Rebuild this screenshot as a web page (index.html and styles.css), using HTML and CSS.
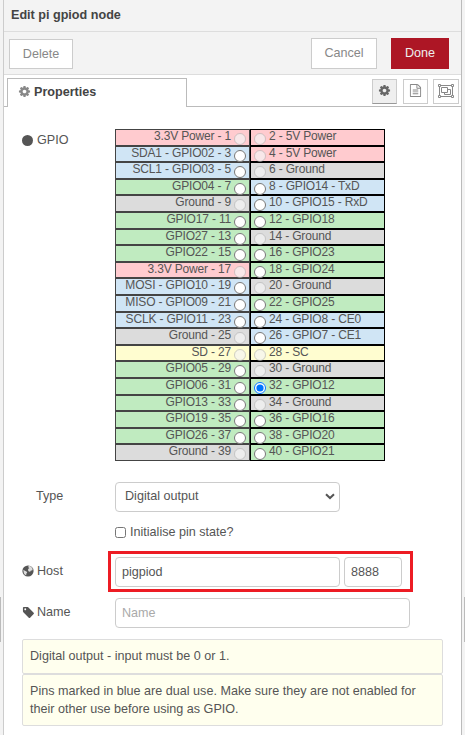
FILE: index.html
```html
<!DOCTYPE html>
<html lang="en">
<head>
<meta charset="utf-8">
<title>Edit pi gpiod node</title>
<link rel="stylesheet" href="styles.css">
</head>
<body>
<svg class="sprite" aria-hidden="true">
<symbol id="cog" viewBox="0 0 1792 1792"><path d="M1152 896q0-106-75-181t-181-75-181 75-75 181 75 181 181 75 181-75 75-181zm512-109v222q0 12-8 23t-20 13l-185 28q-19 54-39 91 35 50 107 138 10 12 10 25t-9 23q-27 37-99 108t-94 71q-12 0-26-9l-138-108q-44 23-91 38-16 136-29 186-7 28-36 28h-222q-14 0-24.500-8.500t-11.500-21.500l-28-184q-49-16-90-37l-141 107q-10 9-25 9-14 0-25-11-126-114-165-168-7-10-7-23 0-12 8-23 15-21 51-66.500t54-70.500q-27-50-41-99l-183-27q-13-2-21-12.500t-8-23.500v-222q0-12 8-23t19-13l186-28q14-46 39-92-40-57-107-138-10-12-10-24 0-10 9-23 26-36 98.500-107.500t94.500-71.500q13 0 26 10l138 107q44-23 91-38 16-136 29-186 7-28 36-28h222q14 0 24.500 8.500t11.500 21.500l28 184q49 16 90 37l142-107q9-9 24-9 13 0 25 10 129 119 165 170 7 8 7 22 0 12-8 23-15 21-51 66.500t-54 70.500q26 50 41 98l183 28q13 2 21 12.500t8 23.500z"/></symbol>
<symbol id="tag" viewBox="0 0 1792 1792"><path d="M576 448q0-53-37.500-90.500t-90.500-37.500-90.500 37.500-37.500 90.500 37.500 90.500 90.500 37.500 90.500-37.500 37.500-90.500zm1067 576q0 53-37 90l-491 492q-39 37-91 37-53 0-90-37l-715-716q-38-37-64.500-101t-26.500-117v-416q0-52 38-90t90-38h416q53 0 117 26.500t102 64.500l715 714q37 39 37 91z"/></symbol>
<symbol id="file" viewBox="0 0 1792 1792"><path d="M1596 380q28 28 48 76t20 88v1152q0 40-28 68t-68 28h-1344q-40 0-68-28t-28-68v-1600q0-40 28-68t68-28h896q40 0 88 20t76 48zm-444-244v376h376q-10-29-22-41l-313-313q-12-12-41-22zm384 1528v-1024h-416q-40 0-68-28t-28-68v-416h-768v1536h1280zm-1024-864q0-14 9-23t23-9h704q14 0 23 9t9 23v64q0 14-9 23t-23 9h-704q-14 0-23-9t-9-23v-64zm736 224q14 0 23 9t9 23v64q0 14-9 23t-23 9h-704q-14 0-23-9t-9-23v-64q0-14 9-23t23-9h704zm0 256q14 0 23 9t9 23v64q0 14-9 23t-23 9h-704q-14 0-23-9t-9-23v-64q0-14 9-23t23-9h704z"/></symbol>
<symbol id="group" viewBox="0 0 16 14"><g fill="none" stroke="currentColor"><path d="M2.500 1.500h11M2.500 12.500h11M1.500 2.500v9M14.500 2.500v9M3.500 3.500h6v5h-6zM9.500 5.500h3v5h-6v-2"/><path d="M.5.500h2v2h-2zM13.500.500h2v2h-2zM.5 11.500h2v2h-2zM13.500 11.500h2v2h-2z"/></g></symbol>
<symbol id="globe" viewBox="0 0 12 12"><circle cx="6" cy="6" r="5.600"/><path class="land" d="M6.200 1.300 8 1.100l1.800 1.300.9 1.700-.5 1.300-1.300.2-.8 1.200-1.300-.4-.9-1.300.5-1.300 1-.7-.9-.6zM1.300 4.800l1.500.9 1.700.8.700 1.100-.8 1-.2 1.700-1.500-.9-.9-1.500z"/></symbol>
</svg>
<main class="tray">
<header class="title">Edit pi gpiod node</header>
<div class="toolbar">
<button class="button delete">Delete</button>
<button class="button cancel">Cancel</button>
<button class="button primary">Done</button>
</div>
<nav class="tabs">
<div class="tab"><svg class="cog"><use href="#cog"/></svg>Properties</div>
<div class="tab-buttons">
<button class="icon-button selected"><svg class="cog"><use href="#cog"/></svg></button>
<button class="icon-button"><svg class="file"><use href="#file"/></svg></button>
<button class="icon-button wide"><svg class="group"><use href="#group"/></svg></button>
</div>
</nav>
<form class="form">
<div class="row pins-row">
<div class="label pins-label"><i class="dot"></i>GPIO</div>
<div class="pins">
<label class="pin power"><span>3.3V Power - 1</span><input type="radio" name="pin" disabled></label>
<label class="pin power"><input type="radio" name="pin" disabled><span>2 - 5V Power</span></label>
<label class="pin dual"><span>SDA1 - GPIO02 - 3</span><input type="radio" name="pin"></label>
<label class="pin power"><input type="radio" name="pin" disabled><span>4 - 5V Power</span></label>
<label class="pin dual"><span>SCL1 - GPIO03 - 5</span><input type="radio" name="pin"></label>
<label class="pin ground"><input type="radio" name="pin" disabled><span>6 - Ground</span></label>
<label class="pin"><span>GPIO04 - 7</span><input type="radio" name="pin"></label>
<label class="pin dual"><input type="radio" name="pin"><span>8 - GPIO14 - TxD</span></label>
<label class="pin ground"><span>Ground - 9</span><input type="radio" name="pin" disabled></label>
<label class="pin dual"><input type="radio" name="pin"><span>10 - GPIO15 - RxD</span></label>
<label class="pin"><span>GPIO17 - 11</span><input type="radio" name="pin"></label>
<label class="pin"><input type="radio" name="pin"><span>12 - GPIO18</span></label>
<label class="pin"><span>GPIO27 - 13</span><input type="radio" name="pin"></label>
<label class="pin ground"><input type="radio" name="pin" disabled><span>14 - Ground</span></label>
<label class="pin"><span>GPIO22 - 15</span><input type="radio" name="pin"></label>
<label class="pin"><input type="radio" name="pin"><span>16 - GPIO23</span></label>
<label class="pin power"><span>3.3V Power - 17</span><input type="radio" name="pin" disabled></label>
<label class="pin"><input type="radio" name="pin"><span>18 - GPIO24</span></label>
<label class="pin dual"><span>MOSI - GPIO10 - 19</span><input type="radio" name="pin"></label>
<label class="pin ground"><input type="radio" name="pin" disabled><span>20 - Ground</span></label>
<label class="pin dual"><span>MISO - GPIO09 - 21</span><input type="radio" name="pin"></label>
<label class="pin"><input type="radio" name="pin"><span>22 - GPIO25</span></label>
<label class="pin dual"><span>SCLK - GPIO11 - 23</span><input type="radio" name="pin"></label>
<label class="pin dual"><input type="radio" name="pin"><span>24 - GPIO8 - CE0</span></label>
<label class="pin ground"><span>Ground - 25</span><input type="radio" name="pin" disabled></label>
<label class="pin dual"><input type="radio" name="pin"><span>26 - GPIO7 - CE1</span></label>
<label class="pin system"><span>SD - 27</span><input type="radio" name="pin" disabled></label>
<label class="pin system"><input type="radio" name="pin" disabled><span>28 - SC</span></label>
<label class="pin"><span>GPIO05 - 29</span><input type="radio" name="pin"></label>
<label class="pin ground"><input type="radio" name="pin" disabled><span>30 - Ground</span></label>
<label class="pin"><span>GPIO06 - 31</span><input type="radio" name="pin"></label>
<label class="pin"><input type="radio" name="pin" checked><span>32 - GPIO12</span></label>
<label class="pin"><span>GPIO13 - 33</span><input type="radio" name="pin"></label>
<label class="pin ground"><input type="radio" name="pin" disabled><span>34 - Ground</span></label>
<label class="pin"><span>GPIO19 - 35</span><input type="radio" name="pin"></label>
<label class="pin"><input type="radio" name="pin"><span>36 - GPIO16</span></label>
<label class="pin"><span>GPIO26 - 37</span><input type="radio" name="pin"></label>
<label class="pin"><input type="radio" name="pin"><span>38 - GPIO20</span></label>
<label class="pin ground"><span>Ground - 39</span><input type="radio" name="pin" disabled></label>
<label class="pin"><input type="radio" name="pin"><span>40 - GPIO21</span></label>
</div>
</div>
<div class="row type-row">
<div class="label indent">Type</div>
<div class="field select"><span>Digital output</span><svg class="chevron" viewBox="0 0 10 7"><path d="M1 1.200 5 5l4-3.800"/></svg></div>
</div>
<label class="check"><input type="checkbox">Initialise pin state?</label>
<div class="row host-row">
<div class="label"><svg class="globe"><use href="#globe"/></svg>Host</div>
<input class="field host" value="pigpiod">
<input class="field port" value="8888">
<div class="highlight"></div>
</div>
<div class="row name-row">
<div class="label"><svg class="tag"><use href="#tag"/></svg>Name</div>
<input class="field name" placeholder="Name">
</div>
<div class="tip">Digital output - input must be 0 or 1.</div>
<div class="tip">Pins marked in blue are dual use. Make sure they are not enabled for<br>their other use before using as GPIO.</div>
</form>
</main>
<i class="handle left"></i>
<i class="handle right"></i>
</body>
</html>
```
FILE: styles.css
```css
* { box-sizing: border-box; }
body {
  margin: 0;
  height: 735px;
  overflow: hidden;
  position: relative;
  padding: 0 3px;
  background: #f3f3f3;
  color: #555;
  font: 12.6px/18px "Liberation Sans", Arial, sans-serif;
}
button, input { font: inherit; color: inherit; }
svg { fill: currentColor; flex: none; }
.sprite { position: absolute; width: 0; height: 0; }
.tray {
  height: 735px;
  background: #fff;
  border-left: 1px solid #ccc;
  border-right: 1px solid #bbb;
}
.title {
  height: 32px;
  padding: 6px 0 0 7px;
  background: #f3f3f3;
  border-bottom: 1px solid #ddd;
  color: #444;
  font-weight: bold;
  font-size: 12.6px;
}
.toolbar {
  display: flex;
  align-items: flex-start;
  height: 43px;
  padding: 6px 12px 0 5px;
  background: #f3f3f3;
  border-bottom: 1px solid #ddd;
}
.button {
  height: 31px;
  padding: 0 0 2px;
  border: 1px solid #ccc;
  background: #fff;
  color: #888;
}
.delete { width: 64px; height: 30px; margin-top: 1px; padding: 0; }
.cancel { width: 66px; margin-left: auto; }
.primary { width: 58px; margin-left: 14px; background: #ad1625; border-color: #ad1625; color: #eee; }
.tabs {
  display: flex;
  justify-content: space-between;
  height: 32px;
  padding: 3px 2px 0 3px;
  background: linear-gradient(#bbb, #bbb) 0 31px / 100% 1px no-repeat;
}
.tab {
  display: flex;
  width: 180px;
  height: 29px;
  padding: 4px 0 0 11px;
  border: 1px solid #bbb;
  border-bottom: 0;
  background: #fff;
  color: #444;
  font-weight: bold;
}
.tab .cog { width: 13px; height: 13px; margin: 2px 3px 0 -1px; color: #888; }
.tab-buttons { display: flex; gap: 6px; padding-top: 1px; }
.icon-button {
  display: flex;
  align-items: center;
  justify-content: center;
  width: 25px;
  height: 25px;
  padding: 0 0 2px;
  border: 1px solid #ccc;
  background: #fff;
  color: #888;
}
.icon-button.wide { width: 26px; margin-left: -1px; }
.icon-button.selected { background: #efefef; border-bottom-color: #999; color: #666; }
.icon-button .cog { width: 13px; height: 13px; }
.file { width: 13px; height: 13px; }
.group { width: 16px; height: 14px; }
.form { padding: 22px 18px 0; }
.row { display: flex; align-items: center; position: relative; }
.label { display: flex; align-items: center; width: 93px; height: 20px; flex: none; }
.pins-row { align-items: flex-start; }
.pins-label { margin-top: 1px; }
.indent { padding-left: 14px; }
.dot { width: 11px; height: 11px; margin-right: 4px; border-radius: 50%; background: #555; }
.globe { width: 12px; height: 12px; margin-right: 3px; }
.land { fill: #ddd; }
.tag { width: 13px; height: 13px; margin-right: 2px; }
.pins {
  display: grid;
  grid-template-columns: 135px 135px;
  grid-auto-rows: 16.6px;
  font-size: 12px;
  letter-spacing: -.17px;
  line-height: 14px;
}
.pin {
  display: flex;
  align-items: flex-start;
  border: 1px solid #000;
  background: #c0ebc0;
  white-space: nowrap;
  overflow: visible;
}
.pin:nth-child(odd) { justify-content: flex-end; padding-right: 3px; border-color: #444; }
.pin:nth-child(even) { padding-left: 3px; }
.pin span { margin-top: -1px; }
.pin input { width: 12px; height: 12px; margin: 3px 0 0 3px; }
.pin:nth-child(even) input { margin: 3px 3px 0 0; }
.power { background: #ffcbcf; }
.dual { background: #d0e5f5; }
.ground { background: #dcdcdc; }
.system { background: #fffdd0; }
.field { height: 30px; border: 1px solid #ccc; border-radius: 4px; background: #fff; padding: 0 6px; outline: 0; }
.type-row { margin-top: 21px; }
.type-row .label, .host-row .label, .name-row .label { margin-top: -1px; }
.select { display: flex; align-items: center; justify-content: space-between; width: 225px; padding: 0 4px 2px 9px; }
.chevron { width: 10px; height: 7px; margin-top: 2px; fill: none; stroke: #555; stroke-width: 2; }
.check { display: flex; align-items: center; height: 20px; margin: 10px 0 0 93px; }
.check input { width: 11px; height: 11px; margin: 1px 4px 0 0; }
.host-row { margin-top: 15px; }
.host { width: 225px; }
.port { width: 58px; margin-left: 4px; }
.highlight {
  position: absolute;
  left: 86px;
  top: -6px;
  width: 305px;
  height: 41px;
  border: 3px solid #ed1c24;
  pointer-events: none;
}
.name-row { margin: 11px 0; }
.name { width: 295px; }
.name::placeholder { color: #aaa; opacity: 1; }
.tip {
  width: 421px;
  padding: 7px;
  height: 35px;
  border: 1px solid #ddd;
  border-radius: 2px;
  background: #ffe;
  white-space: nowrap;
}
.tip + .tip { height: 52px; }
.handle { position: absolute; top: 597px; width: 1px; height: 45px; background: #bbb; }
.left { left: 0; }
.right { right: 0; }
```
